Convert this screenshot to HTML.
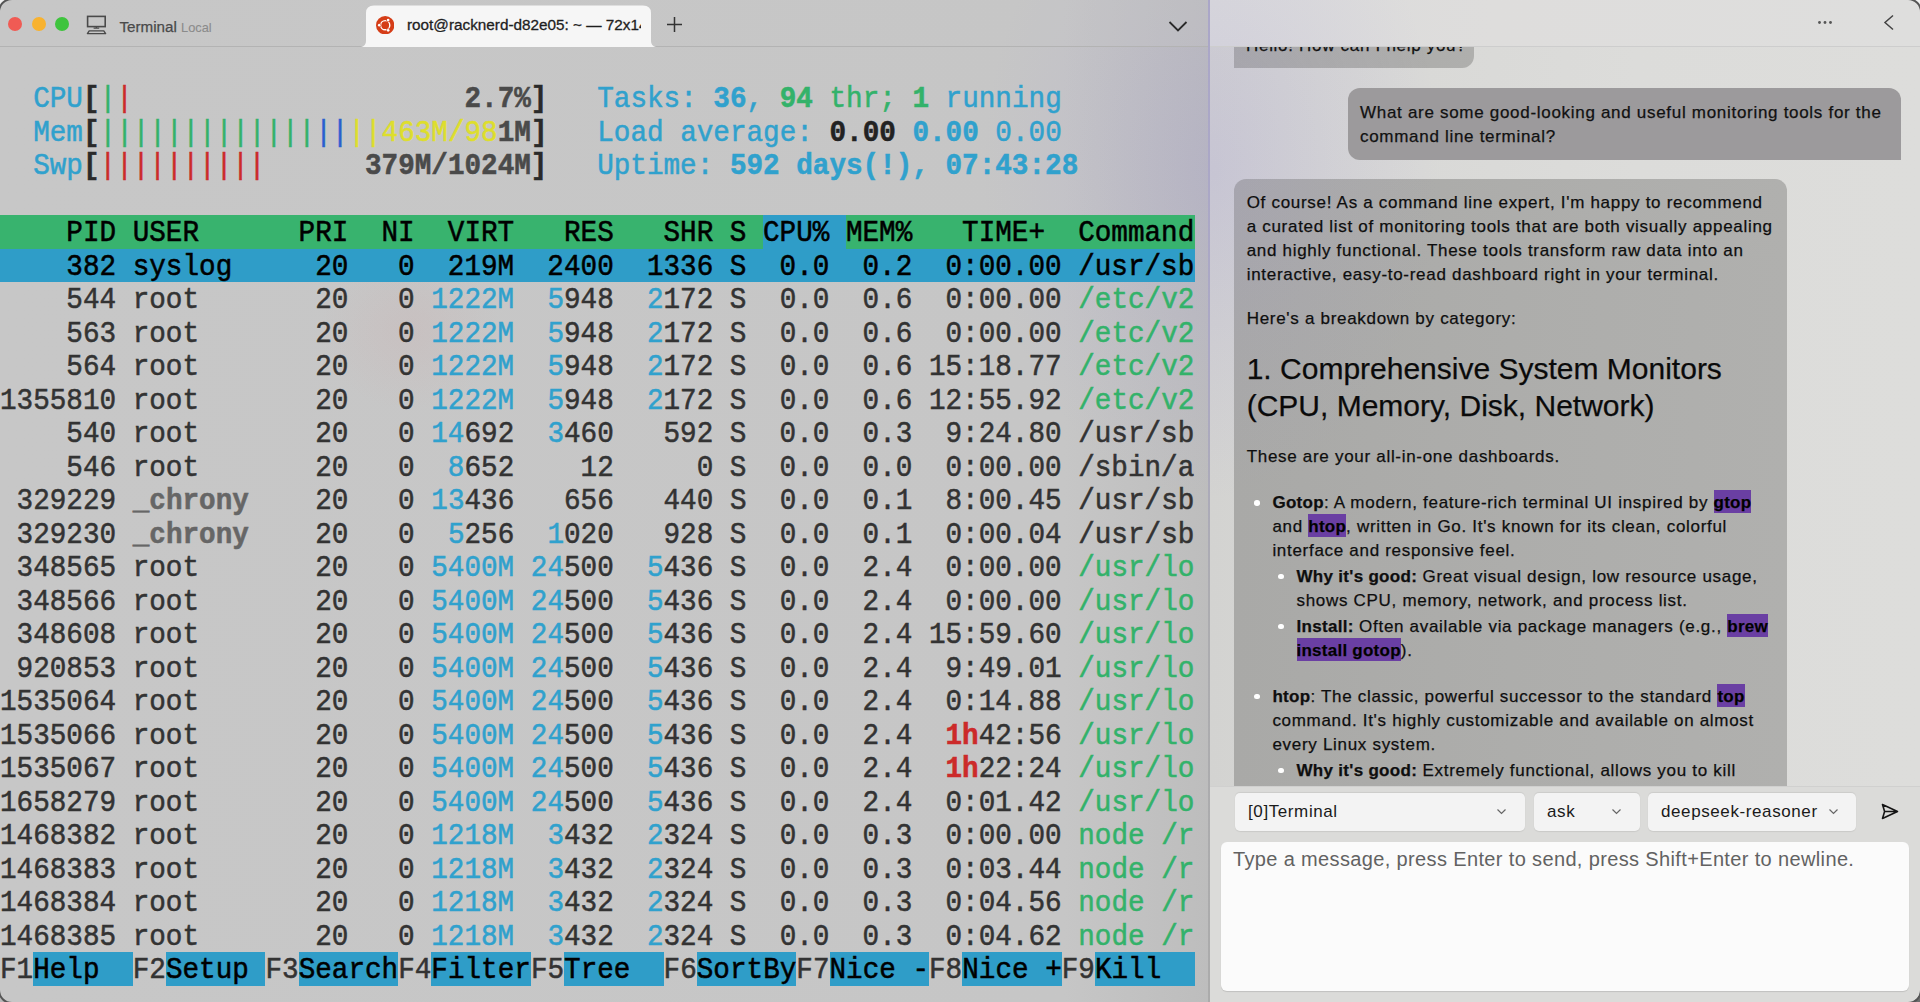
<!DOCTYPE html>
<html><head><meta charset="utf-8">
<style>
:root{--hgreen:#38b36e;--hblue:#2f9dc8;}
*{box-sizing:border-box}
html,body{margin:0;padding:0}
body{width:1920px;height:1002px;overflow:hidden;position:relative;background:linear-gradient(180deg,#f2f2f2 0%,#f2f2f2 50%,rgba(0,0,0,0) 50.1%),linear-gradient(90deg,#b8b8b8 0%,#6e6e6e 100%);font-family:"Liberation Sans",sans-serif}
#win{position:absolute;left:0;top:0;width:1920px;height:1002px;border-radius:12px;overflow:hidden;background:#c7c7c7}
#frame{position:absolute;left:-2px;top:-2px;width:1924px;height:1006px;border:2px solid #555;border-radius:14px;pointer-events:none;z-index:30}
#term{position:absolute;left:0;top:0;width:1209px;height:1002px;background:radial-gradient(ellipse 230px 330px at 1212px 170px,rgba(150,140,220,0.20),rgba(150,140,220,0.08) 55%,rgba(150,140,220,0) 100%),radial-gradient(ellipse 90px 80px at 410px 330px,rgba(205,170,170,0.22),rgba(205,170,170,0) 100%),linear-gradient(90deg,#c7c7c7 0%,#c6c6c6 88%,#bdbdbd 100%)}
#titlebar{position:absolute;left:0;top:0;width:1209px;height:47px;border-bottom:1px solid #b3b3b3;background:rgba(200,200,200,0.3)}
.tlight{position:absolute;top:17px;width:14px;height:14px;border-radius:50%}
.bg{position:absolute;height:33.5px}
.tl{position:absolute;left:0;height:33.5px;line-height:33.5px;white-space:pre;font-family:"Liberation Mono",monospace;font-size:27.65px;color:#333;-webkit-text-stroke:0.5px currentColor;transform:scaleY(1.1);transform-origin:0 24px;margin-top:2.3px}
.c{color:#30a1cd}.cb{color:#30a1cd;font-weight:bold}
.g{color:#33b26a}.gb{color:#33b26a;font-weight:bold}
.r{color:#cc2a2a}.rb{color:#cc2a2a;font-weight:bold}
.bl{color:#2a5fcf}.y{color:#dede2c}
.d{color:#2a2a2a;font-weight:bold}.m{color:#4a4a4a;font-weight:bold}.db{color:#222;font-weight:bold}
.k{color:#000}
.gr{color:#666;font-weight:bold}
#divider{position:absolute;left:1208px;top:0;width:2px;height:1002px;background:linear-gradient(180deg,#aaa6c8 0%,#aba8c4 35%,#acacb0 60%,#ababab 100%)}
#glow{position:absolute;left:0;top:0;width:1920px;height:1002px;pointer-events:none;z-index:20;background:radial-gradient(ellipse 230px 330px at 1212px 170px,rgba(150,140,220,0.20),rgba(150,140,220,0.08) 55%,rgba(150,140,220,0) 100%)}
#side{position:absolute;left:1210px;top:0;width:710px;height:1002px;background:radial-gradient(ellipse 230px 330px at 2px 170px,rgba(150,140,220,0.20),rgba(150,140,220,0.08) 55%,rgba(150,140,220,0) 100%),linear-gradient(90deg,#d3d3d1 0%,#d9d9d7 30%,#dcdcda 60%,#dddddb 100%)}
#shead{position:absolute;left:0;top:0;width:710px;height:47px;border-bottom:1px solid #cdcdcd;background:radial-gradient(ellipse 230px 330px at 2px 170px,rgba(150,140,220,0.20),rgba(150,140,220,0.08) 55%,rgba(150,140,220,0) 100%),linear-gradient(90deg,#dbdbdb 0%,#dedddc 40%,#dededd 100%);z-index:5}
.msg{position:absolute;font-size:17px;letter-spacing:0.7px;line-height:24px;color:#111;padding:12px;-webkit-text-stroke:0.25px #111}
.bub-ai{background:radial-gradient(ellipse 230px 330px at -22px -9px,rgba(150,140,220,0.16),rgba(150,140,220,0.05) 55%,rgba(150,140,220,0) 100%),linear-gradient(90deg,#a9a9a7 0%,#adadab 50%,#b0b0ae 100%);border-radius:12px 12px 12px 0}
.bub-user{background:#9c9a9c;border-radius:12px 12px 0 12px}
.code{background:#6a3fa3;font-weight:bold;color:#000}
#toolbar{position:absolute;left:0;top:786px;width:710px;height:216px;background:#dbdbd9;border-top:1.5px solid #d0d0cf}
.dd{position:absolute;top:793px;height:38px;background:#f3f3f3;border-radius:5px;font-size:17px;letter-spacing:0.6px;line-height:38px;color:#1a1a1a;box-shadow:0 -1px 1px rgba(0,0,0,0.07),0 1px 1px rgba(0,0,0,0.08)}
.dd span{position:absolute;left:13px;top:0}
.chev{position:absolute;top:14px;width:9px;height:9px}
#input{position:absolute;left:10.7px;top:841.5px;width:688.7px;height:149.5px;background:#fbfbfb;border-radius:6px;box-shadow:0 1px 1px rgba(0,0,0,0.12)}
#ph{position:absolute;left:12.3px;top:4.8px;font-size:20px;letter-spacing:0.36px;color:#626262;line-height:26px;white-space:pre}
.ln{position:absolute;height:24px;line-height:24px;white-space:pre;font-size:17px;letter-spacing:0.7px;color:#0e0e0e}
.h3{position:absolute;height:38px;line-height:38px;white-space:pre;font-size:30px;letter-spacing:0;color:#0a0a0a}
.bul{position:absolute;width:5.5px;height:5.5px;border-radius:50%;background:#fff}
.code{padding:3px 0 1.3px;letter-spacing:0.25px}
.ln b{letter-spacing:0.3px}
</style></head><body>
<div id="win">
<div id="term">
  <div id="titlebar">
    <div class="tlight" style="left:7.5px;background:#f05b54"></div>
    <div class="tlight" style="left:31.5px;background:#f8b22f"></div>
    <div class="tlight" style="left:55px;background:#3ec43d"></div>
    <svg style="position:absolute;left:86px;top:15px" width="21" height="20" viewBox="0 0 21 20"><rect x="1.6" y="1.4" width="17.6" height="10.2" fill="none" stroke="#4a4a4a" stroke-width="1.6"/><path d="M10.4 11.6v1.6M7.6 13.2h5.6" stroke="#4a4a4a" stroke-width="1.3" fill="none"/><path d="M3.2 15.9 H17.8 L19.6 18.6 H1.4 Z" fill="none" stroke="#4a4a4a" stroke-width="1.4" stroke-linejoin="round"/></svg>
    <div style="position:absolute;left:119.5px;top:17px;font-size:15.2px;color:#4a4a4a;line-height:20px;-webkit-text-stroke:0.25px #4a4a4a">Terminal <span style="font-size:12.8px;color:#8b8b8b;-webkit-text-stroke:0.1px #8b8b8b">Local</span></div>
    <div id="tab" style="position:absolute;left:361px;top:5px;width:295px;height:42px;">
      <svg style="position:absolute;left:0;top:0" width="295" height="42" viewBox="0 0 295 42"><path d="M0 42 Q5 41 5 36 L5 8 Q5 0.5 13 0.5 L282 0.5 Q290 0.5 290 8 L290 36 Q290 41 295 42 Z" fill="#f6f6f6"/></svg>
      <svg style="position:absolute;left:15px;top:10.8px" width="18.4" height="18.4" viewBox="0 0 18.4 18.4"><circle cx="9.2" cy="9.2" r="9.2" fill="#d53d17"/><circle cx="9.2" cy="9.2" r="4.6" fill="none" stroke="#fff" stroke-width="1.4"/><g fill="#d53d17"><circle cx="3.3" cy="9.2" r="1.9"/><circle cx="12.15" cy="4.1" r="1.9"/><circle cx="12.15" cy="14.3" r="1.9"/></g><g fill="#fff"><circle cx="3.3" cy="9.2" r="1.35"/><circle cx="12.15" cy="4.1" r="1.35"/><circle cx="12.15" cy="14.3" r="1.35"/></g></svg>
      <div style="position:absolute;left:46px;top:10px;width:234px;overflow:hidden;white-space:nowrap;font-size:15.3px;color:#1e1e1e;line-height:20px;-webkit-text-stroke:0.3px #1e1e1e">root@racknerd-d82e05: ~ — 72x144</div>
    </div>
    <svg style="position:absolute;left:666px;top:16px" width="17" height="17" viewBox="0 0 17 17"><path d="M8.5 1v15M1 8.5h15" stroke="#333" stroke-width="1.5"/></svg>
    <svg style="position:absolute;left:1168px;top:19.5px" width="20" height="13" viewBox="0 0 20 13"><path d="M1.5 2 L10 10.5 L18.5 2" stroke="#2a2a2a" stroke-width="1.8" fill="none"/></svg>
  </div>
<div class="bg" style="left:0.00px;width:1194.77px;top:215.00px;background:var(--hgreen)"></div>
<div class="bg" style="left:763.32px;width:82.97px;top:215.00px;background:var(--hblue)"></div>
<div class="bg" style="left:0.00px;width:1194.77px;top:248.50px;background:var(--hblue)"></div>
<div class="bg" style="left:33.19px;width:99.56px;top:952.00px;background:var(--hblue)"></div>
<div class="bg" style="left:165.94px;width:99.56px;top:952.00px;background:var(--hblue)"></div>
<div class="bg" style="left:298.69px;width:99.56px;top:952.00px;background:var(--hblue)"></div>
<div class="bg" style="left:431.44px;width:99.56px;top:952.00px;background:var(--hblue)"></div>
<div class="bg" style="left:564.20px;width:99.56px;top:952.00px;background:var(--hblue)"></div>
<div class="bg" style="left:696.95px;width:99.56px;top:952.00px;background:var(--hblue)"></div>
<div class="bg" style="left:829.70px;width:99.56px;top:952.00px;background:var(--hblue)"></div>
<div class="bg" style="left:962.45px;width:99.56px;top:952.00px;background:var(--hblue)"></div>
<div class="bg" style="left:1095.20px;width:99.56px;top:952.00px;background:var(--hblue)"></div>
<div class="tl" style="top:81.00px">  <span class="c">CPU</span><span class="d">[</span><span class="g">|</span><span class="r">|</span>                    <span class="m">2.7%</span><span class="d">]</span>   <span class="c">Tasks: </span><span class="cb">36</span><span class="c">, </span><span class="gb">94</span><span class="g"> thr; </span><span class="gb">1</span><span class="c"> running</span></div>
<div class="tl" style="top:114.50px">  <span class="c">Mem</span><span class="d">[</span><span class="g">|||||||||||||</span><span class="bl">||</span><span class="y">||</span><span class="y">463M/98</span><span class="m">1M</span><span class="d">]</span>   <span class="c">Load average: </span><span class="db">0.00</span> <span class="cb">0.00</span><span class="c"> 0.00</span></div>
<div class="tl" style="top:148.00px">  <span class="c">Swp</span><span class="d">[</span><span class="r">||||||||||</span>      <span class="m">379M/1024M</span><span class="d">]</span>   <span class="c">Uptime: </span><span class="cb">592 days(!), 07:43:28</span></div>
<div class="tl" style="top:215.00px"><span class="k">    PID USER      PRI  NI  VIRT   RES   SHR S CPU% MEM%   TIME+  Command</span></div>
<div class="tl" style="top:248.50px"><span class="k">    382 syslog     20   0  219M  2400  1336 S  0.0  0.2  0:00.00 /usr/sb</span></div>
<div class="tl" style="top:282.00px">    544 root       20   0 <span class="c">1222M</span>  <span class="c">5</span>948  <span class="c">2</span>172 S  0.0  0.6  0:00.00 <span class="g">/etc/v2</span></div>
<div class="tl" style="top:315.50px">    563 root       20   0 <span class="c">1222M</span>  <span class="c">5</span>948  <span class="c">2</span>172 S  0.0  0.6  0:00.00 <span class="g">/etc/v2</span></div>
<div class="tl" style="top:349.00px">    564 root       20   0 <span class="c">1222M</span>  <span class="c">5</span>948  <span class="c">2</span>172 S  0.0  0.6 15:18.77 <span class="g">/etc/v2</span></div>
<div class="tl" style="top:382.50px">1355810 root       20   0 <span class="c">1222M</span>  <span class="c">5</span>948  <span class="c">2</span>172 S  0.0  0.6 12:55.92 <span class="g">/etc/v2</span></div>
<div class="tl" style="top:416.00px">    540 root       20   0 <span class="c">14</span>692  <span class="c">3</span>460   592 S  0.0  0.3  9:24.80 /usr/sb</div>
<div class="tl" style="top:449.50px">    546 root       20   0  <span class="c">8</span>652    12     0 S  0.0  0.0  0:00.00 /sbin/a</div>
<div class="tl" style="top:483.00px"> 329229 <span class="gr">_chrony  </span>  20   0 <span class="c">13</span>436   656   440 S  0.0  0.1  8:00.45 /usr/sb</div>
<div class="tl" style="top:516.50px"> 329230 <span class="gr">_chrony  </span>  20   0  <span class="c">5</span>256  <span class="c">1</span>020   928 S  0.0  0.1  0:00.04 /usr/sb</div>
<div class="tl" style="top:550.00px"> 348565 root       20   0 <span class="c">5400M</span> <span class="c">24</span>500  <span class="c">5</span>436 S  0.0  2.4  0:00.00 <span class="g">/usr/lo</span></div>
<div class="tl" style="top:583.50px"> 348566 root       20   0 <span class="c">5400M</span> <span class="c">24</span>500  <span class="c">5</span>436 S  0.0  2.4  0:00.00 <span class="g">/usr/lo</span></div>
<div class="tl" style="top:617.00px"> 348608 root       20   0 <span class="c">5400M</span> <span class="c">24</span>500  <span class="c">5</span>436 S  0.0  2.4 15:59.60 <span class="g">/usr/lo</span></div>
<div class="tl" style="top:650.50px"> 920853 root       20   0 <span class="c">5400M</span> <span class="c">24</span>500  <span class="c">5</span>436 S  0.0  2.4  9:49.01 <span class="g">/usr/lo</span></div>
<div class="tl" style="top:684.00px">1535064 root       20   0 <span class="c">5400M</span> <span class="c">24</span>500  <span class="c">5</span>436 S  0.0  2.4  0:14.88 <span class="g">/usr/lo</span></div>
<div class="tl" style="top:717.50px">1535066 root       20   0 <span class="c">5400M</span> <span class="c">24</span>500  <span class="c">5</span>436 S  0.0  2.4  <span class="rb">1h</span>42:56 <span class="g">/usr/lo</span></div>
<div class="tl" style="top:751.00px">1535067 root       20   0 <span class="c">5400M</span> <span class="c">24</span>500  <span class="c">5</span>436 S  0.0  2.4  <span class="rb">1h</span>22:24 <span class="g">/usr/lo</span></div>
<div class="tl" style="top:784.50px">1658279 root       20   0 <span class="c">5400M</span> <span class="c">24</span>500  <span class="c">5</span>436 S  0.0  2.4  0:01.42 <span class="g">/usr/lo</span></div>
<div class="tl" style="top:818.00px">1468382 root       20   0 <span class="c">1218M</span>  <span class="c">3</span>432  <span class="c">2</span>324 S  0.0  0.3  0:00.00 <span class="g">node /r</span></div>
<div class="tl" style="top:851.50px">1468383 root       20   0 <span class="c">1218M</span>  <span class="c">3</span>432  <span class="c">2</span>324 S  0.0  0.3  0:03.44 <span class="g">node /r</span></div>
<div class="tl" style="top:885.00px">1468384 root       20   0 <span class="c">1218M</span>  <span class="c">3</span>432  <span class="c">2</span>324 S  0.0  0.3  0:04.56 <span class="g">node /r</span></div>
<div class="tl" style="top:918.50px">1468385 root       20   0 <span class="c">1218M</span>  <span class="c">3</span>432  <span class="c">2</span>324 S  0.0  0.3  0:04.62 <span class="g">node /r</span></div>
<div class="tl" style="top:952.00px">F1<span class="k">Help  </span>F2<span class="k">Setup </span>F3<span class="k">Search</span>F4<span class="k">Filter</span>F5<span class="k">Tree  </span>F6<span class="k">SortBy</span>F7<span class="k">Nice -</span>F8<span class="k">Nice +</span>F9<span class="k">Kill  </span></div>
</div>
<div id="divider"></div>
<div id="side">
  <div id="shead">
    <svg style="position:absolute;left:604px;top:20px" width="22" height="6" viewBox="0 0 22 6"><circle cx="5.5" cy="2.5" r="1.4" fill="#555"/><circle cx="11" cy="2.5" r="1.4" fill="#555"/><circle cx="16.5" cy="2.5" r="1.4" fill="#555"/></svg>
    <svg style="position:absolute;left:672px;top:14px" width="14" height="18" viewBox="0 0 14 18"><path d="M11 1.5 L3 8.5 L11 15.5" stroke="#444" stroke-width="1.5" fill="none"/></svg>
  </div>
  <div class="msg bub-ai" style="left:24px;top:21.1px;width:240px;height:47.3px;padding-top:13px;border-radius:12px 12px 12px 0;white-space:nowrap;background:radial-gradient(ellipse 230px 330px at -22px 149px,rgba(150,140,220,0.18),rgba(150,140,220,0.06) 55%,rgba(150,140,220,0) 100%),linear-gradient(90deg,#a9a9a7 0%,#afafad 100%)">Hello! How can I help you?</div>
  <div class="msg bub-user" style="left:138px;top:88.2px;width:552.6px;height:71.8px;padding-top:12.6px">What are some good-looking and useful monitoring tools for the command line terminal?</div>
  <div class="msg bub-ai" style="left:24px;top:179px;width:553px;height:607px;overflow:hidden;border-radius:12px 12px 0 0">
<div class="ln" style="top:12.3px;left:12.7px">Of course! As a command line expert, I'm happy to recommend</div>
<div class="ln" style="top:36.1px;left:12.7px">a curated list of monitoring tools that are both visually appealing</div>
<div class="ln" style="top:59.9px;left:12.7px">and highly functional. These tools transform raw data into an</div>
<div class="ln" style="top:83.7px;left:12.7px">interactive, easy-to-read dashboard right in your terminal.</div>
<div class="ln" style="top:127.5px;left:12.7px">Here's a breakdown by category:</div>
<div class="h3" style="top:170.5px;left:12.7px">1. Comprehensive System Monitors</div>
<div class="h3" style="top:208.2px;left:12.7px">(CPU, Memory, Disk, Network)</div>
<div class="ln" style="top:266.1px;left:12.7px">These are your all-in-one dashboards.</div>
<div class="bul" style="top:321.1px;left:20.2px"></div>
<div class="ln" style="top:312.2px;left:38.4px"><b>Gotop</b>: A modern, feature-rich terminal UI inspired by <span class="code">gtop</span></div>
<div class="ln" style="top:335.9px;left:38.4px">and <span class="code">htop</span>, written in Go. It's known for its clean, colorful</div>
<div class="ln" style="top:359.7px;left:38.4px">interface and responsive feel.</div>
<div class="bul" style="top:394.7px;left:44.2px"></div>
<div class="ln" style="top:385.8px;left:62.5px"><b>Why it's good:</b> Great visual design, low resource usage,</div>
<div class="ln" style="top:409.7px;left:62.5px">shows CPU, memory, network, and process list.</div>
<div class="bul" style="top:444.8px;left:44.2px"></div>
<div class="ln" style="top:435.9px;left:62.5px"><b>Install:</b> Often available via package managers (e.g., <span class="code">brew</span></div>
<div class="ln" style="top:459.7px;left:62.5px"><span class="code">install gotop</span>).</div>
<div class="bul" style="top:514.8px;left:20.2px"></div>
<div class="ln" style="top:505.9px;left:38.4px"><b>htop</b>: The classic, powerful successor to the standard <span class="code">top</span></div>
<div class="ln" style="top:529.7px;left:38.4px">command. It's highly customizable and available on almost</div>
<div class="ln" style="top:553.7px;left:38.4px">every Linux system.</div>
<div class="bul" style="top:588.9px;left:44.2px"></div>
<div class="ln" style="top:580.1px;left:62.5px"><b>Why it's good:</b> Extremely functional, allows you to kill</div>
  </div>
  <div id="toolbar">
  </div>
  <div class="dd" style="left:25px;width:290px"><span>[0]Terminal</span><svg class="chev" style="left:262px" viewBox="0 0 9 9"><path d="M0.5 2.5 L4.5 6.5 L8.5 2.5" stroke="#666" stroke-width="1.2" fill="none"/></svg></div>
  <div class="dd" style="left:324px;width:106px"><span>ask</span><svg class="chev" style="left:78px" viewBox="0 0 9 9"><path d="M0.5 2.5 L4.5 6.5 L8.5 2.5" stroke="#666" stroke-width="1.2" fill="none"/></svg></div>
  <div class="dd" style="left:438px;width:208px"><span>deepseek-reasoner</span><svg class="chev" style="left:181px" viewBox="0 0 9 9"><path d="M0.5 2.5 L4.5 6.5 L8.5 2.5" stroke="#666" stroke-width="1.2" fill="none"/></svg></div>
  <svg style="position:absolute;left:670.7px;top:802.6px" width="18" height="17" viewBox="0 0 18 17"><path d="M1.5 1.5 L16.5 8.5 L1.5 15.5 L3.6 8.5 Z M3.6 8.5 H16" stroke="#151515" stroke-width="1.6" fill="none" stroke-linejoin="round"/></svg>
  <div id="input"><div id="ph">Type a message, press Enter to send, press Shift+Enter to newline.</div></div>
</div>
</div>
<div id="frame"></div>
</body></html>
